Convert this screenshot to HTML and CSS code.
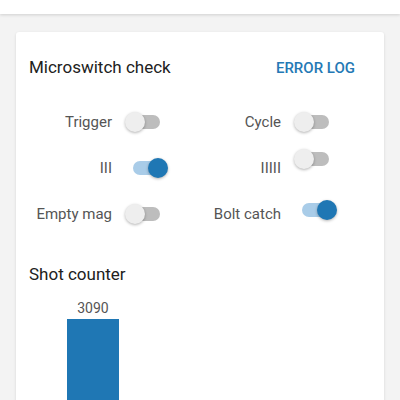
FILE: index.html
```html
<!DOCTYPE html>
<html lang="en">
<head>
    <meta charset="UTF-8">
    <meta name="viewport" content="width=device-width, initial-scale=1.0">
    <title>Microswitch check</title>
    <link rel="stylesheet" href="styles.css">
</head>
<body>
    <div class="topbar"></div>
    <div class="card">
        <div class="card-header">
            <div class="card-title">Microswitch check</div>
            <button class="text-button">ERROR LOG</button>
        </div>
        <div class="switches">
            <span class="label">Trigger</span>
            <span class="switch"><span class="track"></span><span class="thumb"></span></span>
            <span class="label">Cycle</span>
            <span class="switch"><span class="track"></span><span class="thumb"></span></span>

            <span class="label">III</span>
            <span class="switch on"><span class="track"></span><span class="thumb"></span></span>
            <span class="label">IIIII</span>
            <span class="switch raised"><span class="track"></span><span class="thumb"></span></span>

            <span class="label">Empty mag</span>
            <span class="switch"><span class="track"></span><span class="thumb"></span></span>
            <span class="label">Bolt catch</span>
            <span class="switch on lifted"><span class="track"></span><span class="thumb"></span></span>
        </div>
        <div class="section-title">Shot counter</div>
        <div class="chart">
            <div class="bar-group">
                <div class="bar-value">3090</div>
                <div class="bar" style="height: 120px;"></div>
            </div>
        </div>
    </div>
</body>
</html>
```

FILE: styles.css
```css
body {
    margin: 0;
    background: #f3f3f3;
    font-family: Roboto, 'Noto Sans', sans-serif;
    overflow: hidden;
}
.topbar {
    height: 14px;
    background: #fff;
    box-shadow: 0 1px 3px rgba(0, 0, 0, 0.15);
}
.card {
    margin: 18px 16px 0;
    padding: 25px 13px 0;
    background: #fff;
    border-radius: 3px;
    box-shadow: 0 1px 3px rgba(0, 0, 0, 0.12);
}
.card-header {
    display: flex;
    justify-content: space-between;
    align-items: baseline;
    padding-right: 16px;
}
.card-title,
.section-title {
    font-size: 17px;
    line-height: 20px;
    color: #212121;
}
.text-button {
    border: none;
    background: none;
    padding: 0;
    font-family: inherit;
    font-size: 15px;
    font-weight: 500;
    color: #2479b5;
    cursor: pointer;
}
.switches {
    display: grid;
    grid-template-columns: 83px 57px 112px auto;
    grid-auto-rows: 46px;
    align-items: center;
    margin-top: 22px;
}
.label {
    text-align: right;
    font-size: 15px;
    color: #555;
}
.switch {
    position: relative;
    width: 36px;
    height: 20px;
    margin-left: 13px;
}
.track {
    position: absolute;
    left: 1px;
    top: 3px;
    width: 34px;
    height: 14px;
    border-radius: 7px;
    background: #bdbdbd;
}
.thumb {
    position: absolute;
    left: 0;
    top: 0;
    width: 20px;
    height: 20px;
    border-radius: 50%;
    background: #eeeeee;
    box-shadow: 0 1px 3px rgba(0, 0, 0, 0.3);
}
.switch.on {
    margin-left: 20px;
}
.switch.on .track {
    background: #a9cce8;
}
.switch.on .thumb {
    left: 16px;
    background: #1f77b4;
}
.switch.raised {
    margin-bottom: 18px;
}
.switch.lifted {
    margin-bottom: 8px;
}
.section-title {
    margin-top: 27px;
}
.chart {
    display: flex;
    padding-left: 38px;
    margin-top: 16px;
}
.bar-group {
    display: flex;
    flex-direction: column;
    align-items: center;
    width: 52px;
}
.bar-value {
    font-size: 14px;
    line-height: 16px;
    color: #555;
    margin-bottom: 3px;
}
.bar {
    width: 52px;
    background: #1f77b4;
}
```
